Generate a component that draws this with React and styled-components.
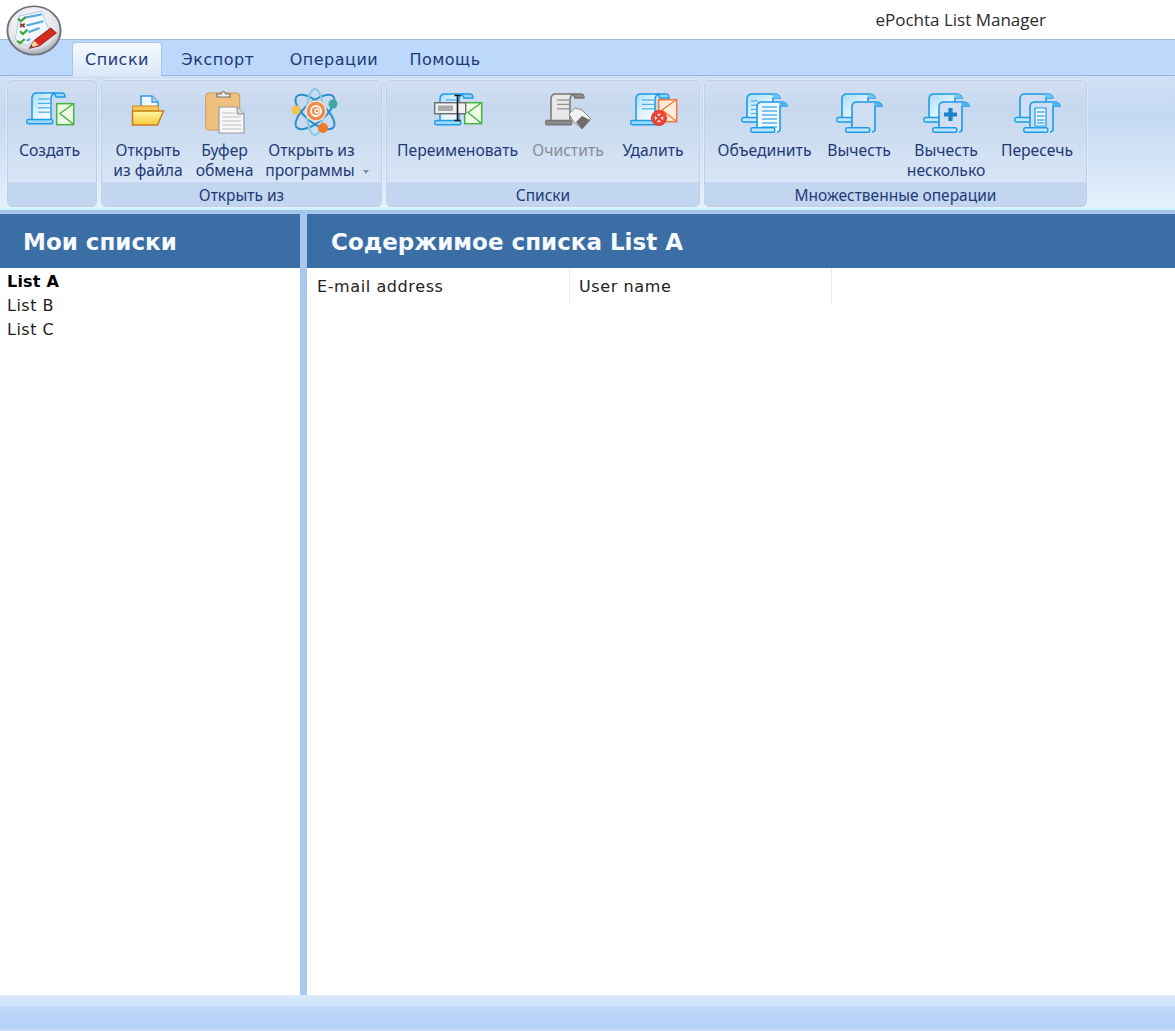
import React from "react";
import styled, { createGlobalStyle } from "styled-components";

const Global = createGlobalStyle`
  html, body { margin: 0; padding: 0; background: #fff; }
  #root { width: 1175px; height: 1031px; overflow: hidden; }
  * { box-sizing: border-box; }
`;

const Page = styled.div`
  position: relative; width: 1175px; height: 1031px; display: flex; flex-direction: column;
  background: #fff; font-family: "Noto Sans", "Open Sans", sans-serif;
`;
const TitleBar = styled.header`
  height: 40px; flex: none; display: flex; align-items: center; justify-content: flex-end;
  padding: 0 129px 0 0; background: #fff; border-bottom: 1px solid #9dbbe0;
`;
const AppTitle = styled.div`font-size: 17px; color: #2b2b2b; font-family: "Open Sans", sans-serif;`;
const Logo = styled.svg`position: absolute; left: 6px; top: 5px; width: 56px; height: 51px; z-index: 3; filter: blur(.4px);`;
const TabStrip = styled.nav`
  height: 36px; flex: none; display: flex; align-items: flex-end; padding-left: 72px;
  background: #bcd8fb; border-bottom: 1px solid #93b6e2;
`;
const Tab = styled.div`
  width: ${p => p.$w}px; height: ${p => p.$active ? 34 : 30}px; display: flex; align-items: center; justify-content: center;
  font: 16px "DejaVu Sans", sans-serif; letter-spacing: .5px; color: #1c3a78;
  margin-bottom: ${p => p.$active ? -1 : 1}px; position: relative;
  ${p => p.$active && `
    background: linear-gradient(#f5f9fe, #dbe8f8);
    border: 1px solid #a9c6ea; border-bottom: 0; border-radius: 4px 4px 0 0;
  `}
`;
const Ribbon = styled.section`
  height: 134px; flex: none; display: flex; gap: 4px; padding: 4px 0 1px 7px;
  background: linear-gradient(#cfe0f5 0, #c4d9f2 30%, #d6e6f8 70%, #e4f1fd 100%);
  border-bottom: 2px solid #d0f0fb;
`;
const Group = styled.div`
  width: ${p => p.$w}px; display: flex; flex-direction: column; border-radius: 5px; overflow: hidden;
  border: 1px solid #bdd2ea; box-shadow: 0 0 0 1px rgba(235,243,252,.55);
  background: linear-gradient(#d3e0f2 0, #c6d8ee 22%, #d2e1f3 60%, #dbe8f7 100%);
`;
const Tools = styled.div`flex: 1; display: flex; padding: 0 7px;`;
const Tool = styled.div`
  width: ${p => p.$w}px; flex: none; display: flex; flex-direction: column; align-items: center;
  font-size: 15.7px; line-height: 20px; text-align: center; white-space: nowrap;
  color: ${p => p.$disabled ? "#888d94" : "#1e3a78"};
`;
const IconBox = styled.div`
  height: 59px; flex: none; width: 100%; display: flex; align-items: center; justify-content: center;
  padding-top: ${p => p.$top ?? 0}px; padding-bottom: ${p => p.$bot ?? 0}px;
`;
const Caption = styled.div`
  height: 24px; flex: none; display: flex; align-items: center; justify-content: center;
  background: #c2d6ef; color: #1e3a78; font-size: 15.5px; padding-top: 1px;
`;
const Arrow = styled.span`
  display: inline-block; width: 0; height: 0; margin-left: 8px; vertical-align: 2px;
  border: 3.5px solid transparent; border-top: 4px solid #7d8fa9; border-bottom: 0;
`;
const LineUp = styled.span`margin-left: ${p => p.$left ?? 0}px; margin-right: ${p => p.$right ?? 0}px;`;
const Divider = styled.div`height: 4px; flex: none; background: #a5c5ec;`;
const Main = styled.main`flex: 1; display: flex; min-height: 0;`;
const Panel = styled.div`display: flex; flex-direction: column; ${p => p.$fill ? "flex: 1;" : `width: ${p.$w}px; flex: none;`}`;
const Splitter = styled.div`width: 7px; flex: none; background: #a7c8ef;`;
const PanelHead = styled.h2`
  margin: 0; height: 54px; flex: none; display: flex; align-items: center; padding: 1px 0 0 ${p => p.$pad}px;
  background: #3a6ea5; color: #f6f9fd; font: bold 23px "DejaVu Sans", sans-serif;
`;
const ListBox = styled.ul`list-style: none; margin: 0; padding: 2px 0 0 7px;`;
const ListItem = styled.li`
  height: 24px; font: ${p => p.$active ? "bold" : "normal"} 16px/24px "DejaVu Sans", sans-serif;
  letter-spacing: ${p => p.$active ? ".2px" : ".5px"}; color: ${p => p.$active ? "#000" : "#222"};
`;
const HeadRow = styled.div`display: flex; height: 36px;`;
const HeadCell = styled.div`
  width: ${p => p.$w}px; flex: none; padding: 6px 0 0 ${p => p.$pad}px; border-right: 1px solid #ececec;
  font: 16px/25px "DejaVu Sans", sans-serif; letter-spacing: .6px; color: #222;
`;
const Status = styled.footer`
  height: 36px; flex: none;
  background: linear-gradient(#dcebfd 0, #cfe3fb 30%, #c0d9fb 34%, #b6d2fa 90%, #cfe0f6 100%);
`;
const Art = styled.svg`display: block; overflow: visible; filter: blur(.35px);`;

const B = "#1c9be6";

const Scroll = ({ x = 0, y = 0, fill = "url(#paper)", stroke = B, bar = "#9ad8fa", lines = 4, w = 32 }) => (
  <g transform={`translate(${x} ${y})`}>
    <path d={`M${w - 4} 1h8q3 0 3 4h-9z`} fill={bar} stroke={stroke} strokeWidth="1.4" />
    <path d={`M6 28V6q0-5 5-5h${w - 14}q-4 1-4 6v21z`} fill={fill} stroke={stroke} strokeWidth="1.5" />
    <rect x=".7" y="27.500" width={w - 6} height="4.300" rx="1.600" fill={bar} stroke={stroke} strokeWidth="1.4" />
    {Array.from({ length: lines }).map((_, i) => (
      <line key={i} x1="12" x2={w - 8} y1={7 + i * 4.4} y2={7 + i * 4.4} stroke={stroke} strokeOpacity=".75" strokeWidth="1.3" />
    ))}
  </g>
);
const Envelope = ({ x = 30, y = 11, stroke = "#45b342", fill = "#eef9e6", w = 17, h = 21 }) => (
  <g transform={`translate(${x} ${y})`}>
    <rect x=".7" y=".7" width={w} height={h} fill={fill} stroke={stroke} strokeWidth="1.5" />
    <path d={`M${w} 1L4 ${h / 2}L${w} ${h}`} fill="none" stroke={stroke} strokeWidth="1.4" />
  </g>
);

const Create = () => (
  <Art width="48" height="33" viewBox="0 0 48 33"><Scroll /><Envelope /></Art>
);
const Rename = () => (
  <Art width="48" height="33" viewBox="0 0 48 33">
    <Scroll lines={2} />
    <Envelope y="9" />
    <rect x=".7" y="9.700" width="31" height="11" fill="#f2f2f2" stroke="#6d6d6d" strokeWidth="1.4" />
    <rect x="4" y="12.500" width="15" height="5.500" fill="#a9a9a9" />
    <path d="M23.500 3v24M20.500 2.500h6M20.500 27.500h6" stroke="#1a1a1a" strokeWidth="1.600" fill="none" />
  </Art>
);
const Clean = () => (
  <Art width="47" height="37" viewBox="0 0 47 37">
    <Scroll fill="#e8e8e8" stroke="#767676" bar="#8d8d8d" lines={3} />
    <path d="M24 21l6-6 7 2 9 9-9 10-9-8z" fill="#f1f1f1" stroke="#8b8b8b" />
    <path d="M31 29l6-6 8 4-8 9z" fill="#6c6c6c" />
  </Art>
);
const Del = () => (
  <Art width="47" height="33" viewBox="0 0 47 33">
    <Scroll lines={3} />
    <Envelope x="28" y="6" stroke="#f07a35" fill="#fdebdc" w="18" h="22" />
    <circle cx="29" cy="25" r="7.500" fill="#f0473a" stroke="#e03327" />
    <circle cx="29" cy="25" r="4.300" fill="#fbd8cf" />
    <path d="M25.300 21.300l7.400 7.400M32.700 21.300l-7.400 7.400" stroke="#e8402f" strokeWidth="2.300" />
  </Art>
);
const Folder = () => (
  <Art width="34" height="33" viewBox="0 0 34 33">
    <path d="M10 20V2h11l6 6v13z" fill="#eef7fe" stroke="#3a9be4" strokeWidth="1.600" />
    <path d="M21 2v6h6" fill="#b8dcf7" stroke="#3a9be4" strokeWidth="1.300" />
    <path d="M1.500 12h26v6h-26z" fill="#f6c85a" stroke="#d28a1c" />
    <path d="M1.500 31V17h31l-6 14z" fill="url(#folder)" stroke="#c67d17" strokeWidth="1.500" />
  </Art>
);
const Clipboard = () => (
  <Art width="40" height="44" viewBox="0 0 40 44">
    <rect x=".7" y="4" width="34" height="37" rx="3" fill="#eec27e" stroke="#c99c58" />
    <path d="M12 8V5h4q2-5 5 0h4v3z" fill="#f1f1f1" stroke="#6f6f6f" strokeWidth="1.200" />
    <path d="M14 18h18l7 7v19H14z" fill="#f8f8f8" stroke="#9a9a9a" strokeWidth="1.200" />
    <path d="M32 18v7h7" fill="#d8d8d8" stroke="#8a8a8a" />
    {[24, 28, 32, 36, 40].map(y => <line key={y} x1="17" x2={y < 27 ? 30 : 36} y1={y} y2={y} stroke="#bfbfbf" />)}
  </Art>
);
const Atom = () => (
  <Art width="48" height="46" viewBox="0 0 48 46">
    <g fill="none" stroke="#2a8fc9" strokeWidth="2">
      <ellipse cx="24" cy="23" rx="24" ry="10" transform="rotate(40 24 23)" />
      <ellipse cx="24" cy="23" rx="24" ry="10" transform="rotate(-40 24 23)" />
      <ellipse cx="24" cy="23" rx="23" ry="8" transform="rotate(90 24 23)" stroke="#85c8e8" />
    </g>
    <circle cx="25" cy="22" r="10" fill="#f08a4b" stroke="#e9e5d8" strokeWidth="1.500" />
    <circle cx="25" cy="22" r="5" fill="none" stroke="#fff" strokeWidth="1.800" />
    <circle cx="26" cy="22" r="2" fill="none" stroke="#fff" strokeWidth="1.300" />
    <circle cx="5" cy="21" r="4.500" fill="#f3c34c" />
    <circle cx="42" cy="15" r="4.500" fill="#3fa6a0" />
    <circle cx="32" cy="39" r="5" fill="#ee7a25" />
  </Art>
);
const HOLLOW = "#cfdef2";
const Multi = ({ backFill = "url(#paper)", frontFill = HOLLOW, backLines = 0, frontLines = 0, plus, inner }) => (
  <Art width="47" height="41" viewBox="0 0 47 41">
    <path d="M6 27V6q0-5 5-5h22q5 0 6 4h-7v22z" fill={backFill} stroke={B} strokeWidth="1.600" />
    <path d="M32 5h7q-1-4-6-4l-2 .5z" fill="#6fc3f5" />
    <rect x=".8" y="24.500" width="16" height="4.500" rx="1.800" fill="#c2e6fb" stroke={B} strokeWidth="1.400" />
    {Array.from({ length: backLines }).map((_, i) => (
      <line key={i} x1="10" x2="17" y1={8 + i * 4.2} y2={8 + i * 4.2} stroke={B} strokeOpacity=".7" strokeWidth="1.300" />
    ))}
    <path d="M16 36V14q0-5 5-5h19q5 0 6 4h-7v23q0 3-3 3" fill={frontFill} stroke={B} strokeWidth="1.600" />
    <path d="M39 13h7q-1-4-6-4l-2 .5z" fill="#4fb3ef" />
    <rect x="9.800" y="34.800" width="24" height="4.500" rx="1.800" fill="#c2e6fb" stroke={B} strokeWidth="1.400" />
    {Array.from({ length: frontLines }).map((_, i) => (
      <line key={i} x1="21" x2="36" y1={14 + i * 4} y2={14 + i * 4} stroke={B} strokeOpacity=".85" strokeWidth="1.300" />
    ))}
    {plus && <path d="M27.500 15v13M21 21.500h13" stroke="#1a83c9" strokeWidth="4.200" />}
    {inner && <path d="M21 15h11v18H21z" fill="#eef7fe" stroke={B} strokeWidth="1.200" />}
    {inner && [19, 23, 27, 30].map(y => <line key={y} x1="23" x2="30.500" y1={y} y2={y} stroke={B} strokeWidth="1.200" />)}
  </Art>
);

const Defs = styled.svg`position: absolute; width: 0; height: 0;`;

export default function App() {
  return (
    <Page>
      <Global />
      <Defs>
        <defs>
          <linearGradient id="paper" x1="0" y1="0" x2="1" y2="1">
            <stop offset="0" stopColor="#a8dcfb" /><stop offset=".55" stopColor="#e6f5fe" /><stop offset="1" stopColor="#fff" />
          </linearGradient>
          <linearGradient id="soft" x1="0" y1="0" x2="1" y2="1">
            <stop offset="0" stopColor="#e7f5fe" /><stop offset="1" stopColor="#fbfdff" />
          </linearGradient>
          <linearGradient id="folder" x1="0" y1="0" x2="0" y2="1">
            <stop offset="0" stopColor="#fff6a8" /><stop offset="1" stopColor="#f8c93c" />
          </linearGradient>
          <radialGradient id="orb" cx=".45" cy=".35" r=".7">
            <stop offset="0" stopColor="#fff" /><stop offset=".72" stopColor="#e0e3e8" /><stop offset="1" stopColor="#878c94" />
          </radialGradient>
        </defs>
      </Defs>
      <Logo viewBox="0 0 60 60" preserveAspectRatio="none">
        <circle cx="30" cy="30" r="28.500" fill="url(#orb)" stroke="#6d7278" strokeWidth="2" />
        <path d="M14 13l24-6 8 22-24 19-12-8z" fill="#f4f9fe" stroke="#9fc4e4" />
        {[[20, 15, 38, 11], [22, 24, 40, 19], [24, 32, 36, 27], [22, 42, 26, 40]].map(([a, b, c, d], i) => (
          <line key={i} x1={a} y1={b} x2={c} y2={d} stroke="#58a8e2" strokeWidth="2.500" />
        ))}
        <path d="M13 16l3 3 5-5M15 31l3 3 5-5M12 42l3 3 5-5" fill="none" stroke="#3fa63a" strokeWidth="2.500" />
        <path d="M15 22l5 4M20 22l-5 4" stroke="#8a3a2a" strokeWidth="2" />
        <path d="M25 51l5-9 18-15 6 6-18 15z" fill="#d92a20" stroke="#8f1710" />
        <path d="M25 51l5-9 5 5z" fill="#f3d7a8" />
        <path d="M25 51l2-4 2 2z" fill="#333" />
      </Logo>
      <TitleBar><AppTitle>ePochta List Manager</AppTitle></TitleBar>
      <TabStrip>
        <Tab $active $w={90}>Списки</Tab>
        <Tab $w={112}>Экспорт</Tab>
        <Tab $w={120}>Операции</Tab>
        <Tab $w={102}>Помощь</Tab>
      </TabStrip>
      <Ribbon>
        <Group $w={90}>
          <Tools>
            <Tool $w={69}><IconBox $bot={4}><Create /></IconBox>Создать</Tool>
          </Tools>
          <Caption />
        </Group>
        <Group $w={281}>
          <Tools>
            <Tool $w={78}><IconBox><Folder /></IconBox>Открыть<br />из файла</Tool>
            <Tool $w={75}><IconBox $top={1}><Clipboard /></IconBox>Буфер<br />обмена</Tool>
            <Tool $w={106}><IconBox $top={2}><Atom /></IconBox><LineUp $right={7}>Открыть из</LineUp><LineUp $left={4}>программы<Arrow /></LineUp></Tool>
          </Tools>
          <Caption>Открыть из</Caption>
        </Group>
        <Group $w={314}>
          <Tools>
            <Tool $w={127}><IconBox $bot={3}><Rename /></IconBox>Переименовать</Tool>
            <Tool $w={94} $disabled><IconBox $top={2}><Clean /></IconBox>Очистить</Tool>
            <Tool $w={76}><IconBox $bot={3}><Del /></IconBox>Удалить</Tool>
          </Tools>
          <Caption>Списки</Caption>
        </Group>
        <Group $w={383}>
          <Tools>
            <Tool $w={105}><IconBox $top={5}><Multi backLines={4} frontLines={6} frontFill="url(#soft)" /></IconBox>Объединить</Tool>
            <Tool $w={84}><IconBox $top={5}><Multi /></IconBox>Вычесть</Tool>
            <Tool $w={90}><IconBox $top={5}><Multi plus /></IconBox>Вычесть<br />несколько</Tool>
            <Tool $w={92}><IconBox $top={5}><Multi inner backFill={HOLLOW} /></IconBox>Пересечь</Tool>
          </Tools>
          <Caption>Множественные операции</Caption>
        </Group>
      </Ribbon>
      <Divider />
      <Main>
        <Panel $w={300}>
          <PanelHead $pad={23}>Мои списки</PanelHead>
          <ListBox>
            <ListItem $active>List A</ListItem>
            <ListItem>List B</ListItem>
            <ListItem>List C</ListItem>
          </ListBox>
        </Panel>
        <Splitter />
        <Panel $fill>
          <PanelHead $pad={24}>Содержимое списка List A</PanelHead>
          <HeadRow>
            <HeadCell $w={263} $pad={10}>E-mail address</HeadCell>
            <HeadCell $w={262} $pad={9}>User name</HeadCell>
          </HeadRow>
        </Panel>
      </Main>
      <Status />
    </Page>
  );
}
